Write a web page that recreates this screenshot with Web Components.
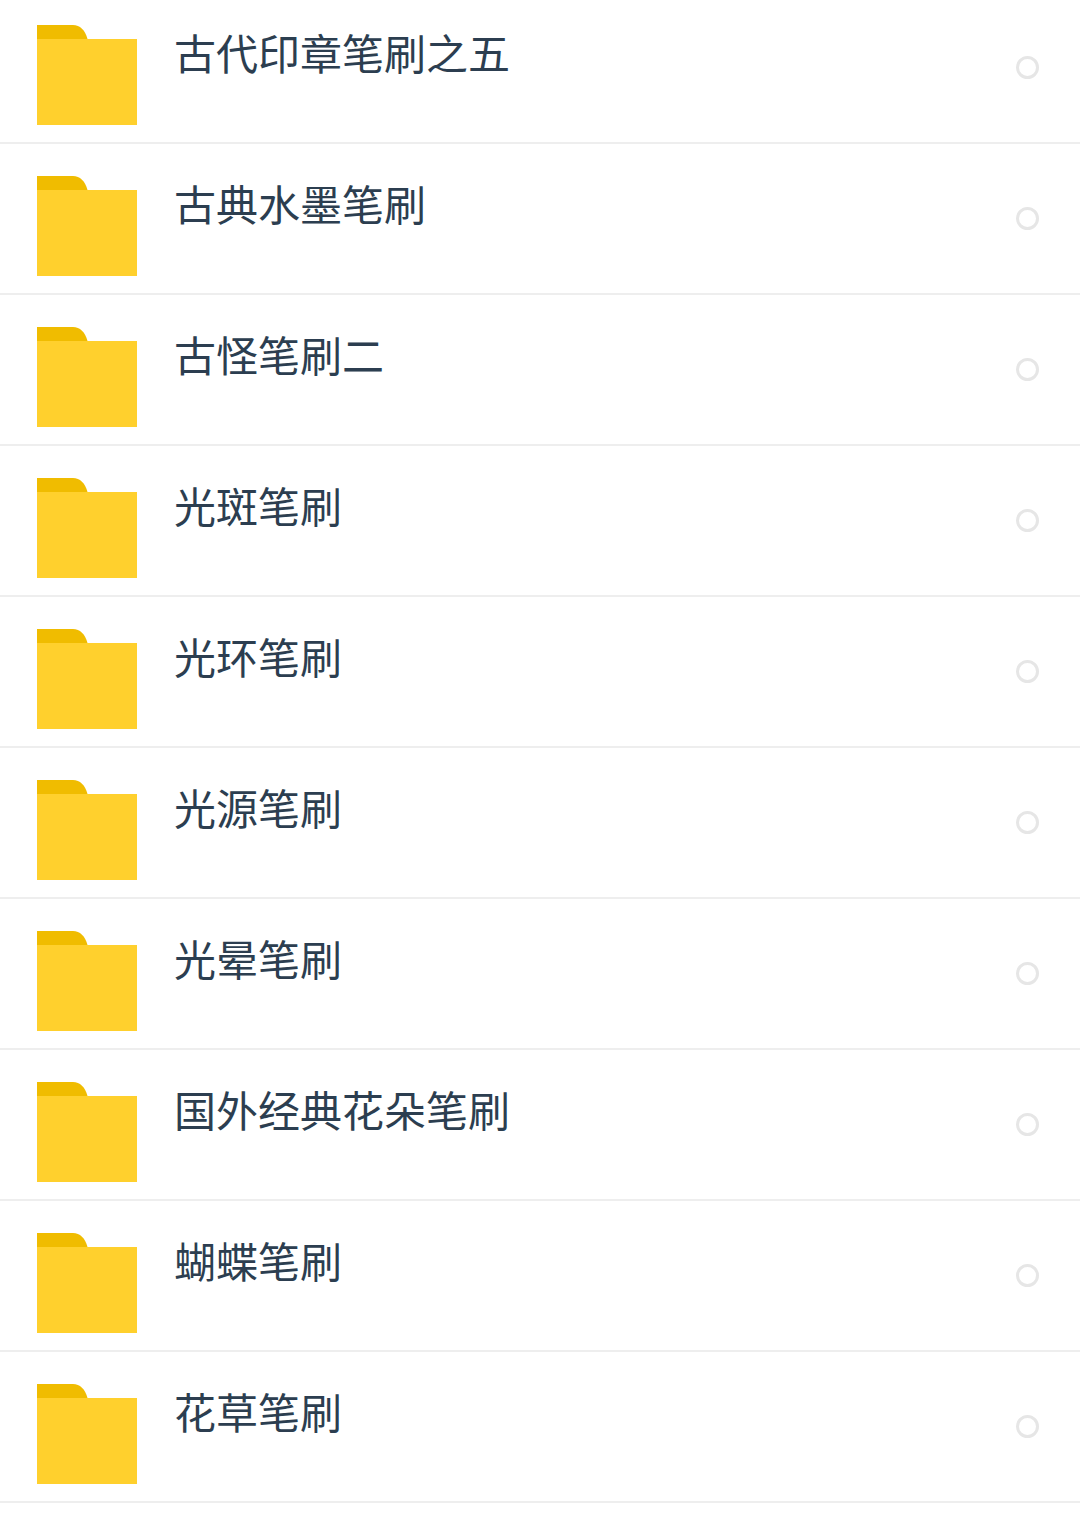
<!DOCTYPE html>
<html lang="zh-CN"><head><meta charset="utf-8">
<style>
html,body{margin:0;padding:0;background:#fff;overflow:hidden}
body{font-family:"Noto Sans CJK SC","Noto Sans",sans-serif}
folder-list{margin-top:-7px}
</style></head><body>
<folder-list>
<folder-row name="古代印章笔刷之五"></folder-row>
<folder-row name="古典水墨笔刷"></folder-row>
<folder-row name="古怪笔刷二"></folder-row>
<folder-row name="光斑笔刷"></folder-row>
<folder-row name="光环笔刷"></folder-row>
<folder-row name="光源笔刷"></folder-row>
<folder-row name="光晕笔刷"></folder-row>
<folder-row name="国外经典花朵笔刷"></folder-row>
<folder-row name="蝴蝶笔刷"></folder-row>
<folder-row name="花草笔刷"></folder-row>
</folder-list>
<script>
class FolderList extends HTMLElement{
  constructor(){super();const s=this.attachShadow({mode:'open'});
  s.innerHTML='<style>:host{display:flex;flex-direction:column}</style><slot></slot>';}
}
class FolderIcon extends HTMLElement{
  constructor(){super();const s=this.attachShadow({mode:'open'});
  s.innerHTML=`<style>:host{display:block;width:100px;height:100px;flex:none}svg{display:block}</style>
  <svg width="100" height="100" viewBox="0 0 100 100"><path fill="#f0bc00" d="M0 0H36C43 0 48 5 50.500 14H0Z"/><rect y="14" width="100" height="86" fill="#ffd02d"/></svg>`;}
}
class FolderRow extends HTMLElement{
  constructor(){super();const s=this.attachShadow({mode:'open'});
  s.innerHTML=`<style>
  :host{display:flex;box-sizing:border-box;height:151px;border-bottom:2px solid #eeeeee;align-items:flex-start;padding-left:37px;padding-right:41px;color:#2c3e50;font-size:42px;font-family:"Noto Sans CJK SC","Noto Sans",sans-serif}
  folder-icon{margin-top:32px}
  .name{margin-left:37px;flex:1;line-height:60px;margin-top:29px;white-space:nowrap}
  .radio{box-sizing:border-box;width:23px;height:23px;border:3px solid #e6e6e6;border-radius:50%;align-self:center;flex:none}
  </style><folder-icon></folder-icon><div class="name"></div><div class="radio"></div>`;}
  connectedCallback(){this.shadowRoot.querySelector('.name').textContent=this.getAttribute('name')}
}
customElements.define('folder-list',FolderList);
customElements.define('folder-icon',FolderIcon);
customElements.define('folder-row',FolderRow);
</script>
</body></html>
